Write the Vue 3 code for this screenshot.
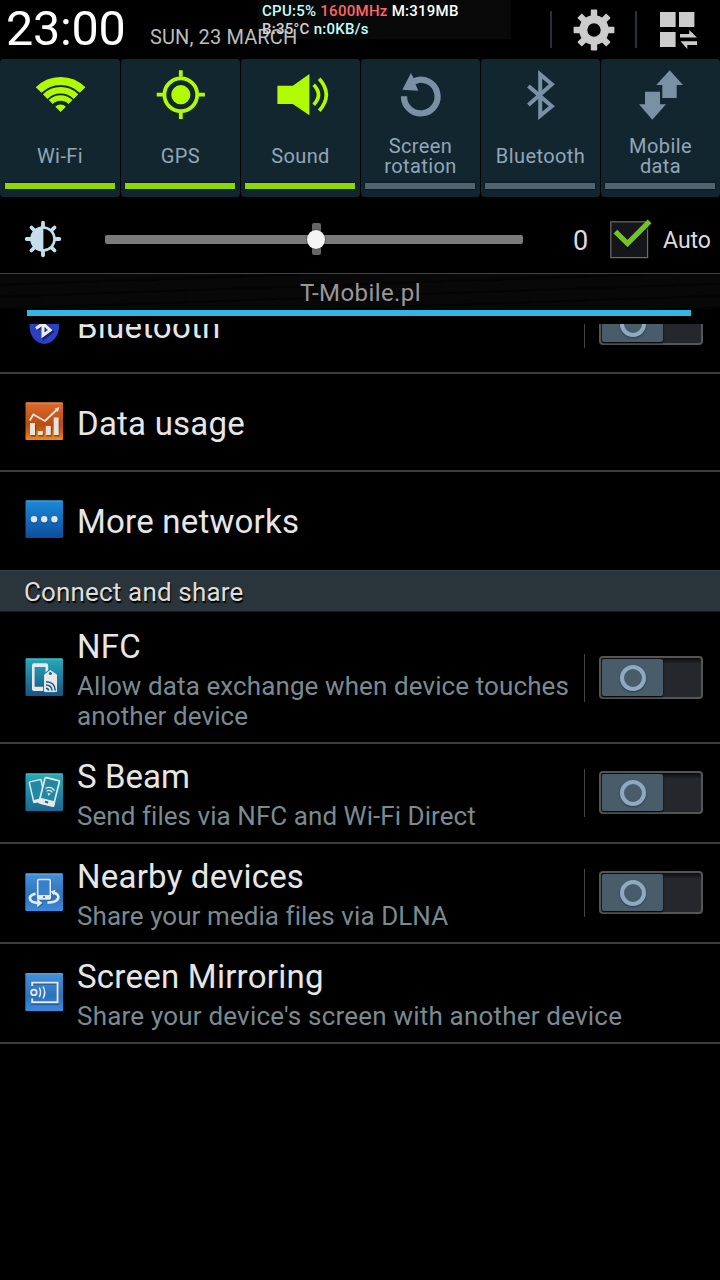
<script setup>
const tiles = [
  { id: 'wifi', label: ['Wi-Fi'], on: true },
  { id: 'gps', label: ['GPS'], on: true },
  { id: 'sound', label: ['Sound'], on: true },
  { id: 'rotate', label: ['Screen', 'rotation'], on: false },
  { id: 'bt', label: ['Bluetooth'], on: false },
  { id: 'data', label: ['Mobile', 'data'], on: false },
]
const networks = [
  { id: 'bluetooth', title: 'Bluetooth', toggle: true },
  { id: 'usage', title: 'Data usage' },
  { id: 'more', title: 'More networks' },
]
const sharing = [
  { id: 'nfc', title: 'NFC', sub: ['Allow data exchange when device touches', 'another device'], toggle: true },
  { id: 'beam', title: 'S Beam', sub: ['Send files via NFC and Wi-Fi Direct'], toggle: true },
  { id: 'nearby', title: 'Nearby devices', sub: ['Share your media files via DLNA'], toggle: true },
  { id: 'mirror', title: 'Screen Mirroring', sub: ["Share your device's screen with another device"] },
]
const groups = [
  { items: networks },
  { heading: 'Connect and share', items: sharing },
]
const eighths = [0, 45, 90, 135, 180, 225, 270, 315]
</script>

<template>
  <div class="screen">
    <header class="top">
      <span class="clock">23:00</span>
      <span class="date">SUN, 23 MARCH</span>
      <div class="top-actions">
        <i class="bar"></i>
        <svg class="gear" width="42" height="42" viewBox="-21 -21 42 42">
          <path d="M0-14.8A14.8 14.8 0 1 1 0 14.8A14.8 14.8 0 1 1 0-14.8ZM0-6.7A6.7 6.7 0 1 0 0 6.7A6.7 6.7 0 1 0 0-6.7Z" fill="#ccc" fill-rule="evenodd" />
          <rect v-for="a in eighths" :key="a" x="-3.2" y="-20.4" width="6.4" height="8" rx=".8" fill="#ccc" :transform="`rotate(${a})`" />
        </svg>
        <i class="bar"></i>
        <svg class="grid" width="38" height="38" viewBox="0 0 38 38" fill="#ccc">
          <path d="M0 1h15.6v15H0zM19 1h15.4v15H19zM0 21h15.6v15H0zM20 23h9.3v-4l7.7 7.6H20zM20.6 30.3H37v3.8h-9.7v4z" />
        </svg>
      </div>
      <div class="monitor">
        <div><span class="cy">CPU:5%</span> <span class="rd">1600MHz</span> <span class="wh">M:319MB</span></div>
        <div class="second"><span class="gr">B:35°C</span> <span class="cy">n:0KB/s</span></div>
      </div>
    </header>

    <section class="tiles">
      <div v-for="t in tiles" :key="t.id" class="tile" :class="{ on: t.on }">
        <svg width="50" height="50" viewBox="0 0 50 50" fill="none" stroke="currentColor">
          <g v-if="t.id === 'wifi'" transform="translate(.4 0)">
            <path d="M3.2 20A31.1 31.1 0 0 1 47.2 20" stroke-width="8" />
            <path d="M9.8 26.6A21.8 21.8 0 0 1 40.6 26.6" stroke-width="6.6" />
            <path d="M15.3 32.1A14 14 0 0 1 35.1 32.1" stroke-width="5.6" />
            <path d="M25.2 42L19.9 36.7A7.5 7.5 0 0 1 30.5 36.7Z" fill="currentColor" stroke="none" />
          </g>
          <g v-else-if="t.id === 'gps'" stroke-width="3.8">
            <circle cx="24.8" cy="24.7" r="16.4" />
            <circle cx="24.8" cy="24.7" r="9.6" fill="currentColor" stroke="none" />
            <path d="M24.8 .3v6.5M24.8 42.5v6.6M.7 24.7h6.5M42.4 24.7h6.5" />
          </g>
          <g v-else-if="t.id === 'sound'">
            <path d="M1.4 15.7H16.8L33.4 4V45.3L16.8 34H1.4Z" fill="currentColor" stroke="none" />
            <path d="M37.7 14.8Q47.2 24.8 37.7 34.8M43.2 8.8Q57.4 24.8 43.2 40.8" stroke-width="3.6" />
          </g>
          <g v-else-if="t.id === 'rotate'">
            <path d="M8 26.2A16.8 16.8 0 1 0 18.5 11" stroke-width="6.2" />
            <path d="M15 3L6.3 19.7L22.3 20.7L19.5 14L24.5 12.7L17.5 8Z" fill="currentColor" stroke="none" />
          </g>
          <path v-else-if="t.id === 'bt'" d="M12.4 16L35.8 36.3L24.2 45.8V4.4L35.8 14.3L12.4 35" stroke-width="4" />
          <path v-else d="M33.7.3L47 15H40.7V28H26.3V15H20.3ZM9 21.7H24V34.3H30L16.3 49.7L3 34.3H9Z" fill="currentColor" stroke="none" />
        </svg>
        <div class="label"><span v-for="l in t.label" :key="l">{{ l }}</span></div>
        <i class="state"></i>
      </div>
    </section>

    <section class="brightness">
      <svg class="sun" width="38" height="38" viewBox="-19 -19 38 38">
        <path v-for="a in eighths" :key="a" d="M0-11.5V-16.3" stroke="#c4dfe9" stroke-width="3.8" stroke-linecap="round" :transform="`rotate(${a})`" />
        <circle r="11.5" fill="#000" stroke="#c4dfe9" stroke-width="2.6" />
        <path d="M.4-12V12A12 12 0 0 1 .4-12Z" fill="#c4dfe9" />
      </svg>
      <div class="track"><i class="tick"></i><i class="knob"></i></div>
      <span class="value">0</span>
      <svg class="check" width="42" height="40" viewBox="0 0 42 40">
        <rect x=".8" y="2.8" width="36.8" height="35.8" fill="#15161a" stroke="#6c6c6e" stroke-width="1.2" />
        <path d="M5.4 12.6L17.5 24.6L39.6 2.4" transform="translate(.5 1.8)" fill="none" stroke="#000" stroke-opacity=".6" stroke-width="5" />
        <path d="M5.4 12.6L17.5 24.6L39.6 2.4" fill="none" stroke="#72c51f" stroke-width="5.2" />
      </svg>
      <span class="auto">Auto</span>
    </section>

    <div class="carrier">T-Mobile.pl</div>
    <div class="handle"></div>

    <main class="list">
      <template v-for="(g, gi) in groups" :key="gi">
        <h2 v-if="g.heading"><span>{{ g.heading }}</span></h2>
        <div v-for="r in g.items" :key="r.id" class="row" :class="r.id">
          <svg class="icon" width="38" height="38" viewBox="0 0 38 38">
            <defs>
              <linearGradient id="orange" x2="0" y2="1"><stop stop-color="#dc6a2c" /><stop offset=".6" stop-color="#b94d12" /><stop offset=".8" stop-color="#d0630f" /><stop offset="1" stop-color="#f08a22" /></linearGradient>
              <linearGradient id="blue" x2="0" y2="1"><stop stop-color="#1b8ad8" /><stop offset="1" stop-color="#0d4e9e" /></linearGradient>
              <linearGradient id="teal" x2="0" y2="1"><stop stop-color="#26a9b9" /><stop offset="1" stop-color="#165584" /></linearGradient>
              <linearGradient id="aqua" x2="0" y2="1"><stop stop-color="#27aab8" /><stop offset="1" stop-color="#1a6a92" /></linearGradient>
              <linearGradient id="sky" x2="0" y2="1"><stop stop-color="#4690dc" /><stop offset=".6" stop-color="#2b74bb" /><stop offset="1" stop-color="#3b8ade" /></linearGradient>
            </defs>
            <g v-if="r.id === 'bluetooth'">
              <ellipse cx="19.3" cy="20.6" rx="14.7" ry="17.3" fill="#2c40c4" />
              <path d="M11 23.5L18 17.5L26 25.6L18 32V5L25.5 11L18 17.5L11 11" transform="translate(1 0)" fill="none" stroke="#16217e" stroke-width="3.4" />
              <path d="M11 22.5L18 17.5L25.2 24.2L18 29.4V5L25.5 11L18 17.5L11 11" fill="none" stroke="#ededed" stroke-width="3" />
            </g>
            <g v-else-if="r.id === 'usage'">
              <rect x=".5" y=".5" width="37.5" height="37.5" rx="1" fill="url(#orange)" />
              <path d="M1 1h36.5" stroke="#ee9563" />
              <path d="M5.5 22h5v11.5h-5zM13.3 29.8h5v3.7h-5zM21.2 25h5v8.5h-5zM29 16h5v17.5h-5z" transform="translate(.4 1)" fill="#000" opacity=".35" />
              <path d="M5 21h5v12H5zM12.8 29h5v4h-5zM20.8 24h5v9h-5zM28.7 15.5h5V33h-5z" fill="#e8e4e0" />
              <path d="M4.8 18.5L8.3 12.5L20 19L31.5 8" fill="none" stroke="#ece6e0" stroke-width="1.8" />
              <path d="M34.4 5L29.6 6.8L32.9 10Z" fill="#ece6e0" />
            </g>
            <g v-else-if="r.id === 'more'">
              <rect x=".5" y=".5" width="37.5" height="37.5" rx="1" fill="url(#blue)" />
              <path d="M1 1h36.5" stroke="#4ba7e5" />
              <g fill="#062f68" opacity=".5"><circle cx="9" cy="20.4" r="3.3" /><circle cx="19.2" cy="20.4" r="3.3" /><circle cx="29.4" cy="20.4" r="3.3" /></g>
              <g fill="#e3e6ea"><circle cx="9" cy="19.2" r="3.2" /><circle cx="19.2" cy="19.2" r="3.2" /><circle cx="29.4" cy="19.2" r="3.2" /></g>
            </g>
            <g v-else-if="r.id === 'nfc'">
              <rect x=".5" y=".5" width="37.5" height="37.5" rx="1" fill="url(#teal)" />
              <path d="M1 1h36.5" stroke="#56c4cf" />
              <path d="M9 5.2H21.2Q23.2 5.2 23.2 7.2V12L20.5 14.5V9H9.6V28.8H18.2V33H9Q7 33 7 31V7.2Q7 5.2 9 5.2Z" fill="#e8e8e8" />
              <path d="M25.4 12.6L31.5 16.8V33.6H19.6V16.8Z" fill="#e8e8e8" stroke="#e8e8e8" stroke-width="1" stroke-linejoin="round" />
              <circle cx="25.4" cy="15.4" r="1.5" fill="#18658c" />
              <path d="M21 30.2Q23.4 30.2 23.6 32.6M21 27Q26.6 27 27 32.6M21 23.8Q29.9 24 30.3 32.6" fill="none" stroke="#185c84" stroke-width="1.5" />
            </g>
            <g v-else-if="r.id === 'beam'">
              <rect x=".5" y=".5" width="37.5" height="37.5" rx="1" fill="url(#aqua)" />
              <path d="M1 1h36.5" stroke="#56c4cf" />
              <g transform="rotate(-13 12 19)">
                <rect x="6.6" y="7.6" width="12" height="20.8" rx="1" fill="#1f8ba5" stroke="#e8e8e8" stroke-width="1.5" /><path d="M6 26h13v3.2H6z" fill="#e8e8e8" />
              </g>
              <g transform="rotate(14 24 19)">
                <rect x="16.8" y="5.7" width="14.8" height="26" rx="1.2" fill="#2289a5" stroke="#e8e8e8" stroke-width="1.7" /><path d="M16 26.6h16.5v5.8H16z" fill="#e8e8e8" /><rect x="22.4" y="28.3" width="3.3" height="2" fill="#19677f" />
                <path d="M19.8 16.3Q24.4 12.4 29 16.3M21.4 18.6Q24.4 16 27.4 18.6" fill="none" stroke="#e8e8e8" stroke-width="1.3" /><path d="M24.4 22.7l-1.8-2.5h3.6z" fill="#e8e8e8" />
              </g>
            </g>
            <g v-else-if="r.id === 'nearby'">
              <rect x=".3" y=".5" width="37.7" height="37.5" rx="1" fill="url(#sky)" />
              <path d="M1 1h36.5" stroke="#71abe5" />
              <g transform="translate(.6 1)" fill="#164f8c" opacity=".6"><rect x="12" y="6" width="14" height="20.6" rx="1.4" /><path d="M17.2 30.1L12.2 25.6V34.4Z" /></g>
              <path d="M10.6 20.6C2.3 22.6 3 29.4 13.2 30.1M27.6 19.4C36.6 21 35.4 29.6 22.4 29.6" fill="none" stroke="#e8e8e8" stroke-width="2.8" />
              <path d="M17.2 30.1L12.2 25.6V34.4ZM25.6 18.6L30.4 16.8L29 22.2Z" fill="#e8e8e8" />
              <rect x="12.7" y="6.5" width="12.6" height="19.2" rx="1.2" fill="#3581cb" stroke="#e8e8e8" stroke-width="1.6" /><path d="M12.4 22h13.2v4.5H12.4z" fill="#e8e8e8" /><circle cx="19" cy="24" r="1" fill="#285d94" />
            </g>
            <g v-else>
              <rect x=".3" y=".3" width="38" height="37.7" rx="1" fill="url(#sky)" />
              <path d="M1 .8h36.5" stroke="#71abe5" />
              <path d="M7.2 14.5V10.8H33V31H7.2V26.5" fill="none" stroke="#174f8b" stroke-width="2" opacity=".7" />
              <path d="M7.2 13.3V9.6H32.6V29.2H7.2V25.5" fill="none" stroke="#e8e8e8" stroke-width="1.9" />
              <circle cx="8.9" cy="19.4" r="2.8" fill="none" stroke="#e8e8e8" stroke-width="1.8" />
              <path d="M14.2 14.7Q17 19.4 14.2 24.1M18 13.5Q21.4 19.4 18 25.4" fill="none" stroke="#e8e8e8" stroke-width="1.5" />
            </g>
          </svg>
          <div class="text">
            <div class="title">{{ r.title }}</div>
            <div v-for="s in r.sub" :key="s" class="sub"><span>{{ s }}</span></div>
          </div>
          <div v-if="r.toggle" class="switch-wrap">
            <div class="switch"><div class="thumb"><i></i></div></div>
          </div>
        </div>
      </template>
    </main>
  </div>
</template>

<style>
html, body { background: #000; }
</style>

<style scoped>
.screen { width: 720px; height: 1280px; overflow: hidden; background: #000; color: #e6e6e6; font-family: Roboto, "Liberation Sans", sans-serif; white-space: nowrap; }
.top { position: relative; height: 59px; display: flex; align-items: flex-start; }
.clock { margin-left: 6px; width: 144px; font-size: 48.5px; letter-spacing: -.25px; line-height: 57px; color: #fff; }
.date { font-size: 20px; line-height: 24px; margin-top: 25px; letter-spacing: .12px; color: #bcbcbc; }
.top-actions { margin-left: auto; display: flex; align-items: flex-start; padding: 9px 22px 0 0; }
.bar { width: 2px; height: 37px; margin-top: 2px; background: #25323b; }
.gear { margin: 0 20px 0 21px; }
.grid { margin: 2px 0 0 23px; }
.monitor { position: absolute; left: 258px; top: 0; width: 249px; height: 37px; padding: 2px 0 0 4px; background: rgba(255, 255, 255, .035); font-size: 15px; line-height: 18px; font-weight: 500; letter-spacing: .27px; }
.cy { color: #c3ffff; } .rd { color: #ff6666; } .wh { color: #fff; } .gr { color: #d2d2d2; }

.tiles { display: grid; grid-template-columns: repeat(6, 120px); height: 138px; }
.tile { margin-left: 1px; border-radius: 4px; background: #122630; color: #7990a5; display: flex; flex-direction: column; align-items: center; padding-top: 11px; }
.tile:first-child { margin-left: 0; }
.tile svg { overflow: visible; flex: none; }
.tile.on svg { color: #b0fb00; }
.label { height: 40px; margin-top: 16px; display: flex; flex-direction: column; justify-content: center; align-items: center; font-size: 20px; line-height: 20px; letter-spacing: .4px; color: #92a6b7; }
.state { width: 110px; height: 6px; margin: 7px 1px 0 0; background: #50646f; box-shadow: 0 0 2px #000; }
.on .state { background: #8ed700; }

.brightness { height: 76px; box-sizing: border-box; display: flex; align-items: center; padding: 9px 9px 0 24px; }
.sun { margin-top: -1px; }
.track { position: relative; margin-left: 43px; width: 418px; height: 9px; border-radius: 2px; background: #7a7a7a; }
.tick { position: absolute; left: 207px; top: -12px; width: 9px; height: 32px; border-radius: 2px; background: #666; }
.knob { position: absolute; left: 202px; top: -5px; width: 18px; height: 19px; border-radius: 50%; background: #f4f4f4; box-shadow: 0 0 2px #222; }
.value { margin-left: 50px; width: 37px; padding-top: 2px; font-size: 27px; color: #dcdcdc; }
.check { margin-top: -2px; flex: none; }
.auto { margin-left: 11px; padding-top: 2px; font-size: 23px; color: #dcdcdc; }

.carrier { height: 35px; border-top: 1px solid #3b474f; background: repeating-linear-gradient(178deg, #080808 0 9px, #040404 10px 12px); text-align: center; font-size: 24px; line-height: 38px; letter-spacing: .42px; text-indent: 1px; color: #989898; }
.handle { width: 664px; height: 6px; margin: 1px 0 8px 27px; background: #33b5e5; }

.list { height: 956px; overflow: hidden; }
.row { height: 96px; border-bottom: 2px solid #3d3d3d; display: flex; align-items: center; padding-left: 25px; }
.row.bluetooth { margin-top: -48px; }
.row.more { border-bottom-color: transparent; }
.row.nfc { height: 130px; }
.row.beam, .row.nearby, .row.mirror { height: 98px; }
.icon { flex: none; margin-top: -2px; }
.nfc .icon { margin-top: 0; }
.bluetooth .icon { margin-top: 2px; }
.text { flex: 1; margin-left: 14px; padding-top: 2px; }
.bluetooth .text { padding-top: 4px; }
.title { font-size: 33px; line-height: 49px; letter-spacing: .22px; color: #e6e6e6; }
.sub { font-size: 26px; line-height: 30px; letter-spacing: .1px; color: #7b8a91; }
.beam .title { letter-spacing: .05px; }
.beam .sub { letter-spacing: .05px; }
.nearby .sub { letter-spacing: .07px; }
.mirror .title { letter-spacing: .24px; }
.mirror .sub { letter-spacing: .2px; }
.nfc .text { padding: 0 0 2px; }
.beam .text, .nearby .text, .mirror .text { padding: 0 0 4px; }
.switch-wrap { display: flex; align-items: center; gap: 14px; margin-right: 17px; }
.bluetooth .switch-wrap, .beam .switch-wrap, .nearby .switch-wrap { padding-bottom: 2px; }
.switch-wrap::before { content: ""; width: 1px; height: 48px; margin-top: 2px; background: #444; }
.switch { width: 104px; height: 43px; box-sizing: border-box; border: 2px solid #555; border-radius: 4px; background: linear-gradient(#0c0c0f, #26272c 15%); }
.thumb { width: 61px; height: 37px; box-shadow: 0 1px 2px #000; margin: 1px 0 0 1px; border-radius: 2px; background: #495c6a; display: flex; align-items: center; justify-content: center; }
.thumb i { width: 18px; height: 18px; margin-top: 1px; border: 4px solid #8fa9c2; border-radius: 50%; box-shadow: 0 1px 2px #263947; }
h2 { margin: 0; height: 42px; box-sizing: border-box; border-top: 1px solid #34444e; border-bottom: 1px solid #151b1f; padding-left: 24px; background: #29343b; font-size: 26px; font-weight: 400; line-height: 43px; letter-spacing: .16px; color: #dedede; text-shadow: 1px 2px 1px #000; }
</style>
